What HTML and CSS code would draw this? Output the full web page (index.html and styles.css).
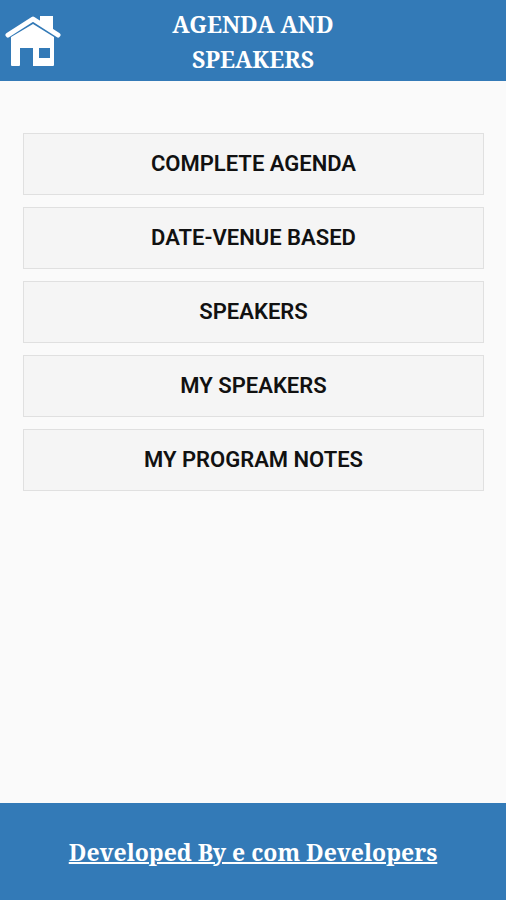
FILE: index.html
```html
<!DOCTYPE html>
<html lang="en">
<head>
<meta charset="utf-8">
<meta name="viewport" content="width=device-width, initial-scale=1">
<title>Agenda and Speakers</title>
<link rel="stylesheet" href="styles.css">
</head>
<body>
<header class="header">
  <a class="home" href="#" aria-label="Home">
    <svg class="home-icon" viewBox="0 0 64 70" aria-hidden="true">
      <path class="line" d="M8 28 33 12 58 28"/>
      <path class="solid" d="M40 9H53V25L40 16z"/>
      <path class="solid" fill-rule="evenodd" d="M33 17 54 30V58Q54 59 53 59H33V41H20V58Q20 59 19 59H12Q11 59 11 58V30zM39 41V51H50V41z"/>
    </svg>
  </a>
  <h1 class="title">AGENDA AND SPEAKERS</h1>
</header>
<main class="menu">
  <button class="item" type="button">COMPLETE AGENDA</button>
  <button class="item" type="button">DATE-VENUE BASED</button>
  <button class="item" type="button">SPEAKERS</button>
  <button class="item" type="button">MY SPEAKERS</button>
  <button class="item" type="button">MY PROGRAM NOTES</button>
</main>
<footer class="footer">
  <a class="credit" href="#">Developed By e com Developers</a>
</footer>
</body>
</html>
```
FILE: styles.css
```css
* { box-sizing: border-box; }

body {
  margin: 0;
  min-height: 100vh;
  display: flex;
  flex-direction: column;
  background: #fafafa;
  color: #111;
  font-family: Roboto, sans-serif;
}

.header {
  display: grid;
  grid-template-columns: 64px 1fr 64px;
  align-items: center;
  padding: 7px 0 4px;
  background: #337ab7;
}

.home { display: block; color: #fff; }
.home-icon { display: block; width: 64px; height: 70px; }
.line {
  fill: none;
  stroke: currentColor;
  stroke-width: 5;
  stroke-linecap: round;
  stroke-linejoin: round;
}
.solid { fill: currentColor; }

.title {
  justify-self: center;
  max-width: 200px;
  margin: 0;
  color: #fff;
  font: bold 23px/35px "Noto Serif", "DejaVu Serif", "Liberation Serif", serif;
  text-align: center;
}

.menu {
  flex: 1;
  display: flex;
  flex-direction: column;
  gap: 12px;
  padding: 52px 22px 24px 23px;
}

.item {
  padding: 14px 8px;
  border: 1px solid #e0e0e0;
  background: #f5f5f5;
  color: #111;
  font: 600 22px/32px Roboto, sans-serif;
}

.footer {
  padding: 33px 16px 31px;
  background: #337ab7;
  text-align: center;
}

.credit {
  color: #fff;
  font: bold 23px/33px "Noto Serif", "DejaVu Serif", "Liberation Serif", serif;
  text-decoration-thickness: 2px;
}
```
